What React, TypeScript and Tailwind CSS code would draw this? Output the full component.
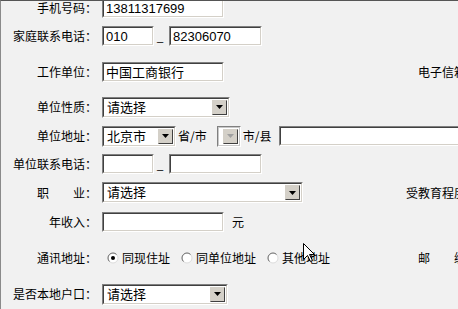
import type { ReactNode } from 'react';

const inputFont = "font-['Liberation_Sans','Noto_Sans_CJK_SC',sans-serif] text-[13px] leading-none text-black";

function Sunken({ w, h = 20, children, disabled }: { w: number | string; h?: number; children?: ReactNode; disabled?: boolean }) {
  return (
    <div
      className="shrink-0 border border-t-[#808080] border-l-[#808080] border-r-white border-b-white"
      style={{ width: w, height: h }}
    >
      <div
        className={`flex h-full w-full items-center border ${
          disabled ? 'border-[#c8c8c8]' : 'border-t-[#404040] border-l-[#404040] border-r-[#d4d0c8] border-b-[#d4d0c8]'
        } bg-white`}
      >
        {children}
      </div>
    </div>
  );
}

function TextBox({ w, value }: { w: number | string; value?: string }) {
  return (
    <Sunken w={w}>
      <span className={`pl-[2px] whitespace-nowrap ${inputFont}`}>{value}</span>
    </Sunken>
  );
}

function Select({ w, value, disabled }: { w: number; value?: string; disabled?: boolean }) {
  return (
    <Sunken w={w} h={21} disabled={disabled}>
      <span className={`flex-1 pl-[3px] whitespace-nowrap ${inputFont}`}>{value}</span>
      <div className="flex h-[15px] w-[15px] shrink-0 items-center justify-center border border-t-[#d4d0c8] border-l-[#d4d0c8] border-r-[#404040] border-b-[#404040] bg-[#d4d0c8] mr-[1px]">
        <svg width="7" height="4" viewBox="0 0 7 4">
          <path d="M0 0 L7 0 L3.5 4 Z" fill={disabled ? '#a0a0a0' : '#000'} />
        </svg>
      </div>
    </Sunken>
  );
}

function Radio({ checked, label }: { checked?: boolean; label: string }) {
  return (
    <div className="flex items-center gap-[3px]">
      <svg width="12" height="12" viewBox="0 0 12 12">
        <circle cx="6" cy="6" r="5" fill="#fff" stroke="#dcdcdc" />
        <path d="M2.46 9.54 A5 5 0 0 1 9.54 2.46" fill="none" stroke="#6e6e6e" />
        {checked && <circle cx="6" cy="6" r="2" fill="#000" />}
      </svg>
      <span className="leading-none">{label}</span>
    </div>
  );
}

function Row({ h, label, right, children, wide }: { h: number; label: string; right?: string; children?: ReactNode; wide?: boolean }) {
  return (
    <div className="flex items-center" style={{ height: h }}>
      <div className="w-[96px] shrink-0 text-right leading-none whitespace-nowrap">{label}</div>
      <div className={`ml-[5px] flex items-center ${wide ? '' : 'w-[276px] shrink-0'}`}>{children}</div>
      {right && <div className="w-[100px] shrink-0 text-right leading-none whitespace-nowrap">{right}</div>}
    </div>
  );
}

const Dash = () => <span className="w-[15px] shrink-0 pr-[3px] text-center text-[12px] leading-none">_</span>;

export default function App() {
  return (
    <div className="relative h-[309px] w-[458px] overflow-hidden border-t border-l border-t-[#555] border-l-[#8a8a8a] bg-[#f1f1f1] font-['Noto_Sans_CJK_SC',sans-serif] text-[12px] text-black">
      <div className="-mt-[7px] w-[620px]">
        <Row h={28} label="手机号码：">
          <TextBox w={122} value="13811317699" />
        </Row>
        <Row h={28} label="家庭联系电话：">
          <TextBox w={52} value="010" />
          <Dash />
          <TextBox w={93} value="82306070" />
        </Row>
        <Row h={44} label="工作单位：" right="电子信箱：">
          <TextBox w={122} value="中国工商银行" />
        </Row>
        <Row h={26} label="单位性质：">
          <Select w={128} value="请选择" />
        </Row>
        <Row h={32} label="单位地址：" wide>
          <Select w={74} value="北京市" />
          <span className="ml-[2px] mr-[10px] leading-none">省/市</span>
          <Select w={24} disabled />
          <span className="ml-[2px] mr-[8px] leading-none">市/县</span>
          <TextBox w={240} />
        </Row>
        <Row h={24} label="单位联系电话：">
          <TextBox w={52} />
          <Dash />
          <TextBox w={93} />
        </Row>
        <Row h={33} label="职　　业：" right="受教育程度：">
          <Select w={201} value="请选择" />
        </Row>
        <Row h={26} label="年收入：">
          <TextBox w={122} />
          <span className="ml-[8px] leading-none">元</span>
        </Row>
        <Row h={46} label="通讯地址：" right="邮　　编：">
          <div className="ml-[5px] flex items-center">
            <Radio checked label="同现住址" />
            <div className="ml-[11px]">
              <Radio label="同单位地址" />
            </div>
            <div className="ml-[11px]">
              <Radio label="其他地址" />
            </div>
          </div>
        </Row>
        <Row h={26} label="是否本地户口：">
          <Select w={126} value="请选择" />
        </Row>
      </div>
      <svg className="absolute left-[302px] top-[242px]" width="13" height="20" viewBox="0 0 13 20">
        <path d="M0.5 0.5 L0.5 16.5 L4.5 12.5 L7.5 18.5 L9.5 17.5 L6.5 11.5 L11.5 11.5 Z" fill="#fff" stroke="#000" strokeWidth="1" />
      </svg>
    </div>
  );
}
